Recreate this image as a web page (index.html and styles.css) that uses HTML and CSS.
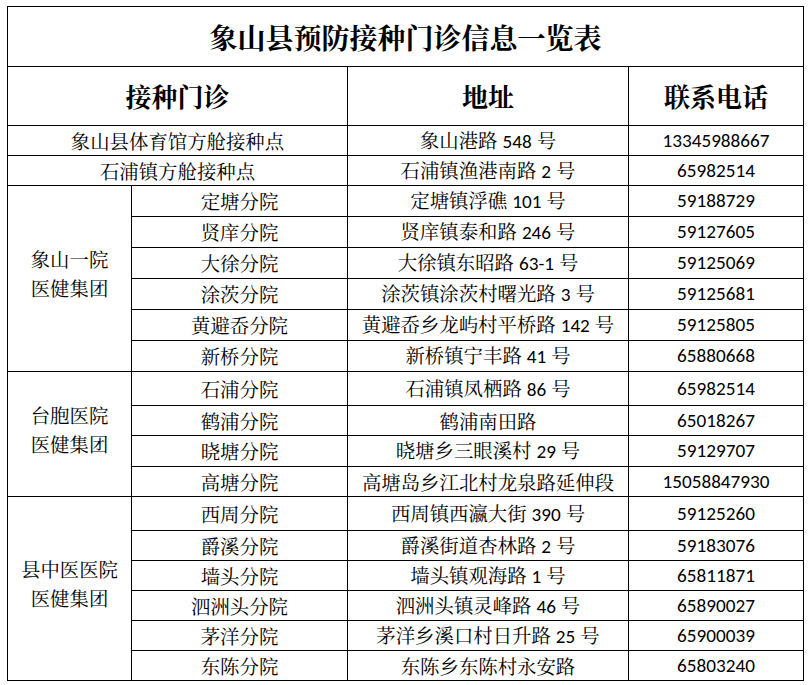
FILE: index.html
```html
<!DOCTYPE html>
<html lang="zh-CN">
<head>
<meta charset="utf-8">
<title>象山县预防接种门诊信息一览表</title>
<link rel="stylesheet" href="styles.css">
</head>
<body>
<div class="page">
<table class="sheet">
<colgroup>
<col class="c1"><col class="c2"><col class="c3"><col class="c4">
</colgroup>
<tr class="r-title"><td colspan="4" class="title">象山县预防接种门诊信息一览表</td></tr>
<tr class="r-head"><td colspan="2" class="head">接种门诊</td><td class="head">地址</td><td class="head">联系电话</td></tr>
<tr class="h30"><td colspan="2">象山县体育馆方舱接种点</td><td>象山港路 <span class="n">548</span> 号</td><td class="n">13345988667</td></tr>
<tr class="h30"><td colspan="2">石浦镇方舱接种点</td><td>石浦镇渔港南路 <span class="n">2</span> 号</td><td class="n">65982514</td></tr>
<tr class="h31"><td rowspan="6" class="group">象山一院<br>医健集团</td><td>定塘分院</td><td>定塘镇浮礁 <span class="n">101</span> 号</td><td class="n">59188729</td></tr>
<tr class="h31"><td>贤庠分院</td><td>贤庠镇泰和路 <span class="n">246</span> 号</td><td class="n">59127605</td></tr>
<tr class="h31"><td>大徐分院</td><td>大徐镇东昭路 <span class="n">63-1</span> 号</td><td class="n">59125069</td></tr>
<tr class="h31"><td>涂茨分院</td><td>涂茨镇涂茨村曙光路 <span class="n">3</span> 号</td><td class="n">59125681</td></tr>
<tr class="h31"><td>黄避岙分院</td><td>黄避岙乡龙屿村平桥路 <span class="n">142</span> 号</td><td class="n">59125805</td></tr>
<tr class="h31"><td>新桥分院</td><td>新桥镇宁丰路 <span class="n">41</span> 号</td><td class="n">65880668</td></tr>
<tr class="h34"><td rowspan="4" class="group">台胞医院<br>医健集团</td><td>石浦分院</td><td>石浦镇凤栖路 <span class="n">86</span> 号</td><td class="n">65982514</td></tr>
<tr class="h30"><td>鹤浦分院</td><td>鹤浦南田路</td><td class="n">65018267</td></tr>
<tr class="h31"><td>晓塘分院</td><td>晓塘乡三眼溪村 <span class="n">29</span> 号</td><td class="n">59129707</td></tr>
<tr class="h30"><td>高塘分院</td><td>高塘岛乡江北村龙泉路延伸段</td><td class="n">15058847930</td></tr>
<tr class="h34"><td rowspan="6" class="group">县中医医院<br>医健集团</td><td>西周分院</td><td>西周镇西瀛大街 <span class="n">390</span> 号</td><td class="n">59125260</td></tr>
<tr class="h30"><td>爵溪分院</td><td>爵溪街道杏林路 <span class="n">2</span> 号</td><td class="n">59183076</td></tr>
<tr class="h30"><td>墙头分院</td><td>墙头镇观海路 <span class="n">1</span> 号</td><td class="n">65811871</td></tr>
<tr class="h30"><td>泗洲头分院</td><td>泗洲头镇灵峰路 <span class="n">46</span> 号</td><td class="n">65890027</td></tr>
<tr class="h30"><td>茅洋分院</td><td>茅洋乡溪口村日升路 <span class="n">25</span> 号</td><td class="n">65900039</td></tr>
<tr class="h30"><td>东陈分院</td><td>东陈乡东陈村永安路</td><td class="n">65803240</td></tr>
</table>
</div>
</body>
</html>
```
FILE: styles.css
```css
html, body {
  margin: 0;
  padding: 0;
  background: #ffffff;
}

.page {
  padding: 6px 0 0 7px;
}

.sheet {
  border-collapse: collapse;
  table-layout: fixed;
  width: 796px;
  font-family: "Noto Serif CJK SC", "Noto Sans CJK SC", serif;
  font-size: 19.4px;
  color: #000;
}

.c1 { width: 124px; }
.c2 { width: 216px; }
.c3 { width: 281px; }
.c4 { width: 175px; }

.sheet td {
  border: 1px solid #000;
  padding: 0;
  text-align: center;
  vertical-align: middle;
  line-height: 22px;
  white-space: nowrap;
  overflow: hidden;
}

.r-title { height: 60px; }
.r-head { height: 59px; }
.h30 { height: 30px; }
.h31 { height: 31px; }
.h34 { height: 34px; }

.title {
  font-size: 28px;
  font-weight: bold;
}

.head {
  font-size: 26px;
  font-weight: bold;
}

.sheet td.group {
  line-height: 29px;
  padding-bottom: 9px;
}

.n {
  font-family: "Carlito", "Lato", sans-serif;
  font-size: 19.2px;
}
```
